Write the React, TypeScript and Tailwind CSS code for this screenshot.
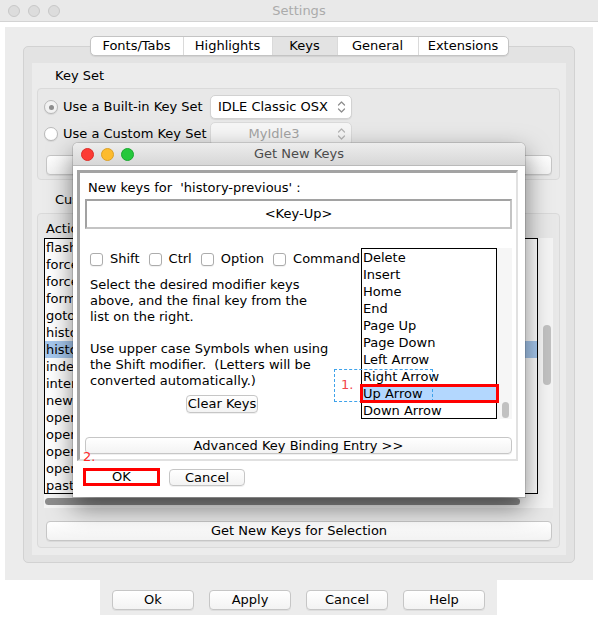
import React from "react";

const btn =
  "flex items-center justify-center rounded-[4px] border border-[#c6c6c6] bg-linear-to-b from-white to-[#f3f3f3] shadow-[0_1px_0_rgba(0,0,0,0.06)] whitespace-nowrap";

const bindings = [
  "flash-paren - <Control-Key-0>",
  "force-open-calltip - <Control-Key-backslash>",
  "force-open-completions - <Control-Key-space>",
  "format-paragraph - <Option-Key-q>",
  "goto-line - <Option-Key-g>",
  "history-next - <Key-Down>",
  "history-previous - <Key-Up>",
  "indent-region - <Control-Key-bracketright>",
  "interrupt-execution - <Control-Key-c>",
  "newline-and-indent - <Key-Return> <Key-KP_Enter>",
  "open-class-browser - <Option-Key-c>",
  "open-module - <Option-Key-m>",
  "open-new-window - <Command-Key-n>",
  "open-window-from-file - <Command-Key-o>",
  "paste - <Command-Key-v>",
];

const keyNames = [
  "Delete", "Insert", "Home", "End", "Page Up", "Page Down",
  "Left Arrow", "Right Arrow", "Up Arrow", "Down Arrow",
];

const tabs = [
  { name: "Fonts/Tabs", w: "w-[92px]" },
  { name: "Highlights", w: "w-[89px]" },
  { name: "Keys", w: "w-[65px]" },
  { name: "General", w: "w-[81px]" },
  { name: "Extensions", w: "flex-1" },
];

function Chevrons({ color = "#8c8c8c" }: { color?: string }) {
  return (
    <svg width="9" height="14" viewBox="0 0 9 14" fill="none" stroke={color} strokeWidth="1.2" strokeLinecap="round" strokeLinejoin="round">
      <path d="M1.5 5 L4.5 2 L7.5 5" />
      <path d="M1.5 9 L4.5 12 L7.5 9" />
    </svg>
  );
}

function Radio({ on }: { on?: boolean }) {
  return (
    <div className={`w-[14px] h-[14px] rounded-full border border-[#b9b9b9] flex items-center justify-center shadow-[0_1px_1px_rgba(0,0,0,0.08)] ${on ? "bg-[#f2f2f2]" : "bg-white"}`}>
      {on && <div className="w-[5px] h-[5px] rounded-full bg-[#8d8d8d]" />}
    </div>
  );
}

function Check({ label }: { label: string }) {
  return (
    <div className="flex items-center gap-[7px]">
      <div className="w-[13px] h-[13px] rounded-[3px] border border-[#acacac] bg-white shadow-[0_1px_1px_rgba(0,0,0,0.06)]" />
      <span>{label}</span>
    </div>
  );
}

function GetNewKeys() {
  return (
    <div className="absolute left-[73px] top-[143px] w-[452px] h-[354px] bg-white rounded-t-[5px] shadow-[0_10px_26px_rgba(0,0,0,0.5),0_0_0_1px_rgba(0,0,0,0.12)]">
      {/* title bar */}
      <div className="h-[23px] flex items-center rounded-t-[5px] bg-linear-to-b from-[#ededed] to-[#d7d7d7] border-b border-[#bababa]">
        <div className="w-[68px] flex gap-[7px] pl-[8px]">
          <div className="w-[13px] h-[13px] rounded-full bg-[#fc3a34] border border-[#dd2c28]" />
          <div className="w-[13px] h-[13px] rounded-full bg-[#fdbb2d] border border-[#dca026]" />
          <div className="w-[13px] h-[13px] rounded-full bg-[#25c83c] border border-[#1aa82f]" />
        </div>
        <div className="flex-1 text-center text-[#4b4b4b]">Get New Keys</div>
        <div className="w-[68px]" />
      </div>

      {/* sunken frame */}
      <div className="ml-[4px] mt-[4px] w-[441px] h-[291px] border-t-[3px] border-l-[3px] border-r-2 border-b-2 border-t-[#a3a3a3] border-l-[#a3a3a3] border-r-[#e1e1e1] border-b-[#e1e1e1]">
        <div className="pl-[8px] mt-[7px] whitespace-pre">New keys for  'history-previous' :</div>
        <div className="mt-[3px] ml-[5px] w-[427px] h-[30px] border-2 border-t-[#a2a2a2] border-l-[#a2a2a2] border-r-[#c4c4c4] border-b-[#c4c4c4] flex items-center justify-center">
          &lt;Key-Up&gt;
        </div>

        <div className="mt-[19px] flex pl-[10px]">
          <div className="w-[271px]">
            <div className="mt-[3px] h-[16px] flex items-center gap-[9px] whitespace-nowrap">
              <Check label="Shift" />
              <Check label="Ctrl" />
              <Check label="Option" />
              <Check label="Command" />
            </div>
            <div className="mt-[10px] whitespace-nowrap">
              <div>Select the desired modifier keys</div>
              <div>above, and the final key from the</div>
              <div>list on the right.</div>
              <div className="h-[16px]" />
              <div>Use upper case Symbols when using</div>
              <div className="whitespace-pre">the Shift modifier.  (Letters will be</div>
              <div>converted automatically.)</div>
            </div>
            <div className={`${btn} mt-[6px] ml-[96px] w-[72px] h-[18px]`}>Clear Keys</div>
          </div>
          <div className="w-[136px] h-[171px] border border-black bg-white">
            {keyNames.map((k) => (
              <div key={k} className={`h-[17px] leading-[17px] pl-[1px] ${k === "Up Arrow" ? "bg-[#b3d7fe]" : ""}`}>{k}</div>
            ))}
          </div>
          <div className="w-[15px] h-[171px] bg-[#f6f6f6] pt-[154px] pl-[5px]">
            <div className="w-[7px] h-[16px] rounded-full bg-[#c1c1c1]" />
          </div>
        </div>

        <div className={`${btn} mt-[18px] ml-[5px] w-[427px] h-[17px]`}>Advanced Key Binding Entry &gt;&gt;</div>
      </div>

      <div className="mt-[7px] pl-[10px] flex gap-[9px]">
        <div className="w-[77px] h-[18px] border-[3px] border-[#ff0000] bg-white flex items-center justify-center">OK</div>
        <div className={`${btn} mt-[1px] w-[76px] h-[17px]`}>Cancel</div>
      </div>

      {/* annotations */}
      <div className="absolute left-[261px] top-[226px] w-[99px] h-[33px] border border-dashed border-[#3ea2ea]" />
      <div className="absolute left-[268px] top-[234px] text-[#f2464d]">1.</div>
      <div className="absolute left-[287px] top-[241px] w-[139px] h-[19px] border-[3px] border-[#ff0000]" />
      <div className="absolute left-[10px] top-[306px] text-[#ff2a2a]">2.</div>
    </div>
  );
}

export default function App() {
  return (
    <div className="relative w-[598px] h-[620px] overflow-hidden bg-white text-black text-[13px] leading-[16px] font-['DejaVu_Sans',sans-serif]">
      {/* Settings title bar */}
      <div className="h-[22px] flex items-center bg-[#e9e9e9] border-b border-[#d3d3d3]">
        <div className="w-[68px] flex gap-[8px] pl-[8px]">
          <div className="w-[12px] h-[12px] rounded-full bg-[#dcdcdc] border border-[#c8c8c8]" />
          <div className="w-[12px] h-[12px] rounded-full bg-[#dcdcdc] border border-[#c8c8c8]" />
          <div className="w-[12px] h-[12px] rounded-full bg-[#dcdcdc] border border-[#c8c8c8]" />
        </div>
        <div className="flex-1 text-center text-[#ababab]">Settings</div>
        <div className="w-[68px]" />
      </div>

      {/* window body */}
      <div className="mt-[5px] ml-[5px] w-[588px] h-[553px] bg-[#ececec] pt-[9px]">
        <div className="relative z-10 flex justify-center">
          <div className="w-[419px] h-[20px] flex rounded-[5px] border border-[#c4c4c4] bg-white overflow-hidden shadow-[0_1px_1px_rgba(0,0,0,0.08)]">
            {tabs.map((t, i) => (
              <div key={t.name} className={`${t.w} flex items-center justify-center ${i > 0 ? "border-l border-[#dadada]" : ""} ${t.name === "Keys" ? "bg-[#e3e3e3]" : ""}`}>
                {t.name}
              </div>
            ))}
          </div>
        </div>

        <div className="-mt-[10px] ml-[18px] w-[552px] h-[517px] bg-[#e3e3e3] border border-[#d2d2d2] rounded-[5px] pt-[16px] px-[8px]">
          <div className="w-[534px] h-[492px] bg-[#ececec]">
            <div className="pl-[23px] pt-[5px]">Key Set</div>

            <div className="mt-[4px] ml-[5px] w-[523px] h-[92px] border border-[#dadada] rounded-[4px] bg-[#e8e8e8]">
              <div className="mt-[6px] flex items-center h-[24px]">
                <div className="w-[172px] flex items-center gap-[5px] pl-[6px] whitespace-nowrap">
                  <Radio on />
                  <span>Use a Built-in Key Set</span>
                </div>
                <div className="w-[142px] h-[24px] rounded-[5px] border border-[#d2d2d2] bg-white shadow-[0_1px_1px_rgba(0,0,0,0.08)] flex items-center pl-[7px] pr-[5px]">
                  <span className="flex-1">IDLE Classic OSX</span>
                  <Chevrons />
                </div>
              </div>
              <div className="mt-[3px] flex items-center h-[24px]">
                <div className="w-[172px] flex items-center gap-[5px] pl-[6px] whitespace-nowrap">
                  <Radio />
                  <span>Use a Custom Key Set</span>
                </div>
                <div className="w-[142px] h-[24px] rounded-[5px] border border-[#dadada] bg-[#f6f6f6] flex items-center pr-[5px]">
                  <span className="flex-1 text-center text-[#a4a4a4]">MyIdle3</span>
                  <Chevrons color="#b4b4b4" />
                </div>
              </div>
              <div className={`${btn} mt-[9px] ml-[8px] w-[506px] h-[20px]`}>Save as New Custom Key Set</div>
            </div>

            <div className="pl-[23px] mt-[12px]">Custom Key Bindings</div>

            <div className="mt-[5px] ml-[5px] w-[523px] h-[335px] border border-[#dadada] rounded-[4px] bg-[#e8e8e8]">
              <div className="pl-[8px] mt-[7px]">Action - Key(s)</div>
              <div className="mt-[1px] ml-[6px] w-[509px]">
                <div className="flex">
                  <div className="w-[494px] h-[256px] border border-black bg-white overflow-hidden">
                    {bindings.map((b) => (
                      <div key={b} className={`h-[17px] leading-[17px] pl-[1px] whitespace-nowrap ${b.startsWith("history-previous") ? "bg-[#a6c8ee]" : ""}`}>{b}</div>
                    ))}
                  </div>
                  <div className="w-[15px] h-[256px] bg-[#f4f4f4] pt-[87px] pl-[5px]">
                    <div className="w-[8px] h-[60px] rounded-full bg-[#c1c1c1]" />
                  </div>
                </div>
                <div className="w-[509px] h-[14px] bg-[#f4f4f4] pt-[4px] pl-[1px]">
                  <div className="w-[475px] h-[7px] rounded-full bg-[#8c8c8c]" />
                </div>
              </div>
              <div className={`${btn} mt-[13px] ml-[8px] w-[506px] h-[20px]`}>Get New Keys for Selection</div>
            </div>
          </div>
        </div>
      </div>

      {/* bottom button bar */}
      <div className="ml-[100px] w-[397px] h-[35px] bg-[#ececec] flex gap-[15px] pl-[12px] pt-[10px]">
        <div className={`${btn} w-[82px] h-[20px]`}>Ok</div>
        <div className={`${btn} w-[82px] h-[20px]`}>Apply</div>
        <div className={`${btn} w-[82px] h-[20px]`}>Cancel</div>
        <div className={`${btn} w-[82px] h-[20px]`}>Help</div>
      </div>

      <GetNewKeys />
    </div>
  );
}
